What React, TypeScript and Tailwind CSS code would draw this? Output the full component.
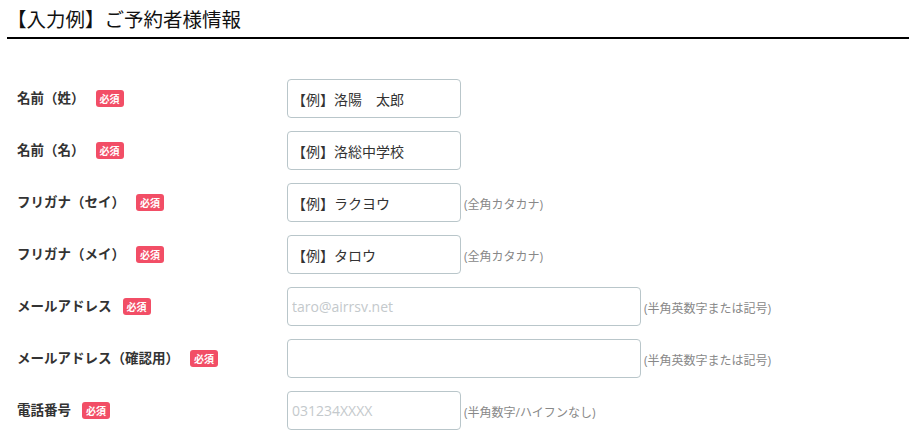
import React from "react";

const font = { fontFamily: '"Open Sans", "Noto Sans CJK JP", sans-serif' };

type Row = {
  label: string;
  value?: string;
  placeholder?: string;
  wide?: boolean;
  hint?: string;
};

const rows: Row[] = [
  { label: "名前（姓）", value: "【例】洛陽　太郎" },
  { label: "名前（名）", value: "【例】洛総中学校" },
  { label: "フリガナ（セイ）", value: "【例】ラクヨウ", hint: "(全角カタカナ)" },
  { label: "フリガナ（メイ）", value: "【例】タロウ", hint: "(全角カタカナ)" },
  { label: "メールアドレス", placeholder: "taro@airrsv.net", wide: true, hint: "(半角英数字または記号)" },
  { label: "メールアドレス（確認用）", wide: true, hint: "(半角英数字または記号)" },
  { label: "電話番号", placeholder: "031234XXXX", hint: "(半角数字/ハイフンなし)" },
];

function Badge() {
  return (
    <span className="ml-[11px] inline-flex h-[17px] items-center rounded-[3px] bg-[#f24e66] px-[4px] text-[10px] font-bold leading-none text-white">
      必須
    </span>
  );
}

function FormRow({ row }: { row: Row }) {
  return (
    <div className="flex h-[39px] items-center">
      <div className="flex w-[287px] shrink-0 items-center pl-[17px] text-[13.5px] font-bold text-[#333]">
        <span>{row.label}</span>
        <Badge />
      </div>
      <input
        readOnly
        defaultValue={row.value}
        placeholder={row.placeholder}
        className={`h-[39px] ${row.wide ? "w-[354px]" : "w-[174px]"} rounded-[4px] border border-[#b9c6ca] bg-white px-[4px] text-[14px] text-[#333] outline-none placeholder:text-[#c4c9cc]`}
        style={font}
      />
      {row.hint && <span className="ml-[3px] mt-[4px] text-[12px] text-[#888]">{row.hint}</span>}
    </div>
  );
}

export default function App() {
  return (
    <div className="h-[447px] w-[916px] overflow-hidden bg-white" style={font}>
      <div className="px-[7px] pt-[6px]">
        <h2 className="border-b-2 border-black pb-[4px] text-[19.5px] leading-[27px] text-[#111]">
          【入力例】ご予約者様情報
        </h2>
      </div>
      <div className="mt-[40px] flex flex-col gap-[13px]">
        {rows.map((r) => (
          <FormRow key={r.label} row={r} />
        ))}
      </div>
    </div>
  );
}
